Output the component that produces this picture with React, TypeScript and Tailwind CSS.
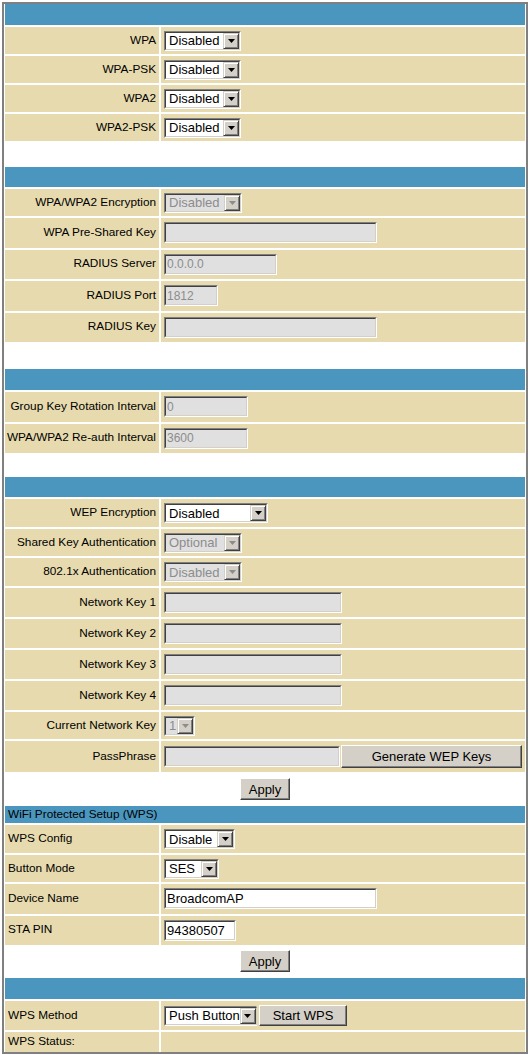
import React from "react";

const TAN = "bg-[#e6daae]";

function Arrow({ disabled }: { disabled?: boolean }) {
  return (
    <div className="w-[16px] shrink-0 bg-[#d4d0c8] border border-t-[#d4d0c8] border-l-[#d4d0c8] border-r-[#404040] border-b-[#404040] shadow-[inset_1px_1px_#ffffff,inset_-1px_-1px_#808080] flex items-center justify-center">
      <svg width="7" height="4" viewBox="0 0 7 4">
        <polygon points="0,0 7,0 3.5,4" fill={disabled ? "#8c8c8c" : "#000000"} />
      </svg>
    </div>
  );
}

function Select({ w, text, disabled }: { w: string; text: string; disabled?: boolean }) {
  return (
    <div className={`${w} h-[20px] shrink-0 flex border border-t-[#808080] border-l-[#808080] border-r-white border-b-white`}>
      <div
        className={`flex-1 flex border border-t-[#404040] border-l-[#404040] border-r-[#d4d0c8] border-b-[#d4d0c8] ${
          disabled ? "bg-[#e0e0e0] text-[#8c8c8c]" : "bg-white text-black"
        }`}
      >
        <span className="flex-1 flex items-center pl-[3px] text-[13px] leading-none whitespace-nowrap overflow-hidden">{text}</span>
        <Arrow disabled={disabled} />
      </div>
    </div>
  );
}

function Input({ w, value, disabled }: { w: string; value?: string; disabled?: boolean }) {
  return (
    <div className={`${w} h-[21px] shrink-0 border border-t-[#808080] border-l-[#808080] border-r-white border-b-white`}>
      <div
        className={`h-full flex items-center px-[1px] border border-t-[#404040] border-l-[#404040] border-r-[#d4d0c8] border-b-[#d4d0c8] leading-none whitespace-nowrap ${
          disabled ? "bg-[#e0e0e0] text-[#8c8c8c] text-[12px]" : "bg-white text-black text-[13px]"
        }`}
      >
        {value}
      </div>
    </div>
  );
}

function Btn({ cls, children }: { cls: string; children: React.ReactNode }) {
  return (
    <div
      className={`${cls} shrink-0 bg-[#d4d0c8] border border-t-white border-l-white border-r-[#404040] border-b-[#404040] shadow-[inset_-1px_-1px_#808080] flex items-center justify-center text-[13px] text-black leading-none whitespace-nowrap`}
    >
      {children}
    </div>
  );
}

function Row({
  h,
  label,
  left,
  children,
}: {
  h: string;
  label: string;
  left?: boolean;
  children?: React.ReactNode;
}) {
  return (
    <div className={`${h} flex gap-[2px]`}>
      <div
        className={`w-[154px] shrink-0 ${TAN} flex items-center text-[11.8px] text-black whitespace-nowrap ${
          left ? "justify-start pl-[3px]" : "justify-end pr-[3px]"
        }`}
      >
        {label}
      </div>
      <div className={`flex-1 ${TAN} flex items-center pl-[3px]`}>{children}</div>
    </div>
  );
}

function Header({ h, children }: { h: string; children?: React.ReactNode }) {
  return (
    <div className={`${h} bg-[#4a96be] flex items-center pl-[3px] text-[11.8px] text-black`}>{children}</div>
  );
}

export default function App() {
  return (
    <div className="bg-white w-[528px] min-h-[1055px] pt-[2px] pl-[2px] font-['Liberation_Sans',Arial,sans-serif]">
      <div className="w-[526px] border-2 border-[#808080] px-px flex flex-col gap-[2px]">
        <Header h="h-[21px]" />
        <Row h="h-[27px]" label="WPA">
          <Select w="w-[77px]" text="Disabled" />
        </Row>
        <Row h="h-[27px]" label="WPA-PSK">
          <Select w="w-[77px]" text="Disabled" />
        </Row>
        <Row h="h-[27px]" label="WPA2">
          <Select w="w-[77px]" text="Disabled" />
        </Row>
        <Row h="h-[27px]" label="WPA2-PSK">
          <Select w="w-[77px]" text="Disabled" />
        </Row>
        <div className="h-[22px]" />

        <Header h="h-[20px]" />
        <Row h="h-[27px]" label="WPA/WPA2 Encryption">
          <Select w="w-[78px]" text="Disabled" disabled />
        </Row>
        <Row h="h-[29.5px]" label="WPA Pre-Shared Key">
          <Input w="w-[213px]" disabled />
        </Row>
        <Row h="h-[29.5px]" label="RADIUS Server">
          <Input w="w-[113px]" value="0.0.0.0" disabled />
        </Row>
        <Row h="h-[29.5px]" label="RADIUS Port">
          <Input w="w-[54px]" value="1812" disabled />
        </Row>
        <Row h="h-[29.5px]" label="RADIUS Key">
          <Input w="w-[213px]" disabled />
        </Row>
        <div className="h-[23px]" />

        <Header h="h-[21px]" />
        <Row h="h-[29.5px]" label="Group Key Rotation Interval">
          <Input w="w-[84px]" value="0" disabled />
        </Row>
        <Row h="h-[29.5px]" label="WPA/WPA2 Re-auth Interval">
          <Input w="w-[84px]" value="3600" disabled />
        </Row>
        <div className="h-[20px]" />

        <Header h="h-[20px]" />
        <Row h="h-[28px]" label="WEP Encryption">
          <Select w="w-[104px]" text="Disabled" />
        </Row>
        <Row h="h-[27px]" label="Shared Key Authentication">
          <Select w="w-[78px]" text="Optional" disabled />
        </Row>
        <Row h="h-[28px]" label="802.1x Authentication">
          <Select w="w-[78px]" text="Disabled" disabled />
        </Row>
        <Row h="h-[29px]" label="Network Key 1">
          <Input w="w-[178px]" disabled />
        </Row>
        <Row h="h-[29px]" label="Network Key 2">
          <Input w="w-[178px]" disabled />
        </Row>
        <Row h="h-[29px]" label="Network Key 3">
          <Input w="w-[178px]" disabled />
        </Row>
        <Row h="h-[29px]" label="Network Key 4">
          <Input w="w-[178px]" disabled />
        </Row>
        <Row h="h-[27px]" label="Current Network Key">
          <Select w="w-[31px]" text="1" disabled />
        </Row>
        <Row h="h-[31px]" label="PassPhrase">
          <Input w="w-[176px]" disabled />
          <Btn cls="w-[181px] h-[23px] ml-px">Generate WEP Keys</Btn>
        </Row>
        <div className="h-[30px] flex justify-center items-start pt-[4px]">
          <Btn cls="w-[50px] h-[22px]">Apply</Btn>
        </div>

        <Header h="h-[17px]">WiFi Protected Setup (WPS)</Header>
        <Row h="h-[28px]" label="WPS Config" left>
          <Select w="w-[71px]" text="Disable" />
        </Row>
        <Row h="h-[27px]" label="Button Mode" left>
          <Select w="w-[55px]" text="SES" />
        </Row>
        <Row h="h-[29.5px]" label="Device Name" left>
          <Input w="w-[213px]" value="BroadcomAP" />
        </Row>
        <Row h="h-[29.5px]" label="STA PIN" left>
          <Input w="w-[72px]" value="94380507" />
        </Row>
        <div className="h-[29px] flex justify-center items-start pt-[3px]">
          <Btn cls="w-[50px] h-[22px]">Apply</Btn>
        </div>

        <Header h="h-[21px]" />
        <Row h="h-[29px]" label="WPS Method" left>
          <Select w="w-[93px]" text="Push Button" />
          <Btn cls="w-[88px] h-[21px] ml-[2px]">Start WPS</Btn>
        </Row>
        <Row h="h-[20px]" label="WPS Status:" left />
      </div>
    </div>
  );
}
